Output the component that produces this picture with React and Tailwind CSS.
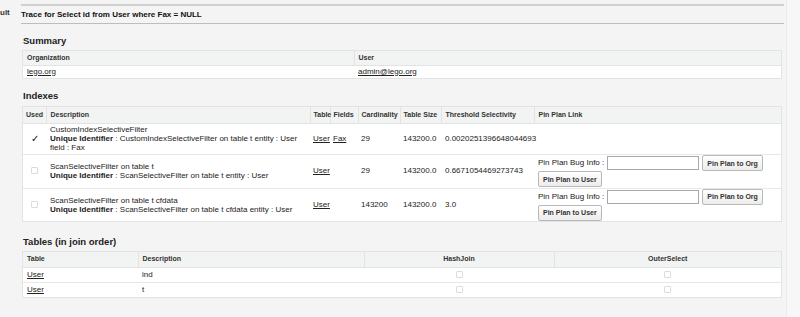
import React from 'react';

const indexRows = [
  {
    used: true,
    name: 'CustomIndexSelectiveFilter',
    uid: ['CustomIndexSelectiveFilter on table t entity : User', 'field : Fax'],
    table: 'User',
    field: 'Fax',
    cardinality: '29',
    size: '143200.0',
    threshold: '0.0020251396648044693',
    pin: false,
    h: 'h-[31px]',
  },
  {
    used: false,
    name: 'ScanSelectiveFilter on table t',
    uid: ['ScanSelectiveFilter on table t entity : User'],
    table: 'User',
    field: '',
    cardinality: '29',
    size: '143200.0',
    threshold: '0.6671054469273743',
    pin: true,
    h: 'h-[34px]',
  },
  {
    used: false,
    name: 'ScanSelectiveFilter on table t cfdata',
    uid: ['ScanSelectiveFilter on table t cfdata entity : User'],
    table: 'User',
    field: '',
    cardinality: '143200',
    size: '143200.0',
    threshold: '3.0',
    pin: true,
    h: 'h-[33px]',
  },
];

const joinRows = [
  { table: 'User', desc: 'ind' },
  { table: 'User', desc: 't' },
];

const Box = () => (
  <span className="inline-block align-middle w-[7px] h-[7px] border border-[#dcdcdc] bg-white rounded-[1px]" />
);

const Btn = ({ children }) => (
  <button className="h-[16px] px-[4px] text-[7px] font-bold text-[#333] border border-[#b8b8b8] rounded-[2px] bg-gradient-to-b from-white to-[#ececec] leading-none">
    {children}
  </button>
);

const Heading = ({ children, className = '' }) => (
  <h2 className={`text-[9.5px] font-bold text-[#222] pl-[23px] leading-[12px] ${className}`}>{children}</h2>
);

const th = 'text-left font-bold text-[7px] text-[#333] px-[4px] whitespace-nowrap border-l border-[#e3e3e3] first:border-l-0';

export default function App() {
  return (
    <div className="w-[800px] h-[317px] bg-[#f7f7f7] flex font-['Liberation_Sans',Arial,sans-serif] text-[#222] overflow-hidden">
      <div className="w-[787px] border-r border-[#ececec] bg-[#f4f4f4] relative">
        <div className="absolute left-0 top-[9px] text-[8px] font-bold text-[#333] leading-none">ult</div>
        <div className="ml-[21px] mr-[2px]">
          <div className="mt-[4px] h-[2px] bg-[#d0d0d0]" />
          <div className="h-[17px] flex items-center text-[8px] font-bold text-[#111]">
            Trace for Select id from User where Fax = NULL
          </div>
          <div className="h-px bg-[#bdbdbd]" />
        </div>

        <Heading className="mt-[11px]">Summary</Heading>
        <div className="ml-[22px] w-[760px] mt-[3px] border border-[#e3e3e3] bg-white">
          <table className="w-full table-fixed border-collapse text-[8px]">
            <colgroup>
              <col className="w-[331px]" />
              <col />
            </colgroup>
            <thead>
              <tr className="h-[14px] bg-[#f2f3f3] border-b border-[#e3e3e3]">
                <th className={th}>Organization</th>
                <th className={th}>User</th>
              </tr>
            </thead>
            <tbody>
              <tr className="h-[13px]">
                <td className="px-[4px] underline">lego.org</td>
                <td className="px-[4px] underline">admin@lego.org</td>
              </tr>
            </tbody>
          </table>
        </div>

        <Heading className="mt-[11px]">Indexes</Heading>
        <div className="ml-[22px] w-[760px] mt-[4px] border border-[#e3e3e3] bg-white">
          <table className="w-full table-fixed border-collapse text-[8px]">
            <colgroup>
              <col className="w-[23px]" />
              <col className="w-[264px]" />
              <col className="w-[20px]" />
              <col className="w-[28px]" />
              <col className="w-[42px]" />
              <col className="w-[41px]" />
              <col className="w-[93px]" />
              <col />
            </colgroup>
            <thead>
              <tr className="h-[16px] bg-[#f2f3f3] border-b border-[#e3e3e3]">
                <th className={`${th} !px-[3px]`}>Used</th>
                <th className={th}>Description</th>
                <th className={`${th} !px-[3px]`}>Table</th>
                <th className={`${th} !px-[3px]`}>Fields</th>
                <th className={`${th} !px-[3px]`}>Cardinality</th>
                <th className={`${th} !px-[3px]`}>Table Size</th>
                <th className={th}>Threshold Selectivity</th>
                <th className={th}>Pin Plan Link</th>
              </tr>
            </thead>
            <tbody>
              {indexRows.map((r, i) => (
                <tr key={i} className={`${r.h} border-b border-[#e8e8e8] last:border-b-0`}>
                  <td className="px-[4px] text-center">
                    {r.used ? (
                      <span className="text-[10px] text-[#111]">✓</span>
                    ) : (
                      <Box />
                    )}
                  </td>
                  <td className="px-[4px] leading-[9px] whitespace-nowrap">
                    <div>{r.name}</div>
                    <div>
                      <span className="font-bold">Unique Identifier</span>
                      <span>{' : ' + r.uid[0]}</span>
                    </div>
                    {r.uid[1] && <div>{r.uid[1]}</div>}
                  </td>
                  <td className="px-[3px] underline">{r.table}</td>
                  <td className="px-[3px] underline">{r.field}</td>
                  <td className="px-[3px]">{r.cardinality}</td>
                  <td className="px-[3px]">{r.size}</td>
                  <td className="px-[4px] whitespace-nowrap">{r.threshold}</td>
                  <td className="px-[4px] py-0">
                    {r.pin && (
                      <div className="flex flex-col items-start">
                        <div className="flex items-center gap-[3px]">
                          <span>Pin Plan Bug Info :</span>
                          <input className="w-[92px] h-[14px] border border-[#a8a8a8] bg-white" />
                          <Btn>Pin Plan to Org</Btn>
                        </div>
                        <Btn>Pin Plan to User</Btn>
                      </div>
                    )}
                  </td>
                </tr>
              ))}
            </tbody>
          </table>
        </div>

        <Heading className="mt-[14px]">Tables (in join order)</Heading>
        <div className="ml-[22px] w-[760px] mt-[3px] border border-[#e3e3e3] bg-white">
          <table className="w-full table-fixed border-collapse text-[8px]">
            <colgroup>
              <col className="w-[115px]" />
              <col className="w-[226px]" />
              <col className="w-[190px]" />
              <col />
            </colgroup>
            <thead>
              <tr className="h-[15px] bg-[#f2f3f3] border-b border-[#e3e3e3]">
                <th className={th}>Table</th>
                <th className={th}>Description</th>
                <th className={`${th} !text-center`}>HashJoin</th>
                <th className={`${th} !text-center`}>OuterSelect</th>
              </tr>
            </thead>
            <tbody>
              {joinRows.map((r, i) => (
                <tr key={i} className="h-[15px] border-b border-[#e8e8e8] last:border-b-0">
                  <td className="px-[4px] underline">{r.table}</td>
                  <td className="px-[4px]">{r.desc}</td>
                  <td className="text-center leading-none"><Box /></td>
                  <td className="text-center leading-none"><Box /></td>
                </tr>
              ))}
            </tbody>
          </table>
        </div>
      </div>
    </div>
  );
}
